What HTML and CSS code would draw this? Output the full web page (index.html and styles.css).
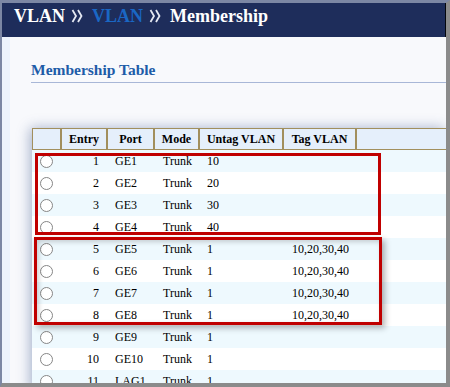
FILE: index.html
```html
<!DOCTYPE html>
<html lang="en">
  <head>
    <meta charset="UTF-8" />
    <meta name="viewport" content="width=device-width, initial-scale=1.0" />
    <title>VLAN Membership</title>
    <link rel="stylesheet" href="styles.css">
  </head>

  <body>
    <div class="window">
      <div class="top-bar">
        <span class="crumb">VLAN</span>
        <svg class="sep" width="12" height="14" viewBox="0 0 12 14">
          <polyline points="1.5,1 5,7 1.5,13" />
          <polyline points="7,1 10.5,7 7,13" />
        </svg>
        <span class="crumb crumb-link">VLAN</span>
        <svg class="sep" width="12" height="14" viewBox="0 0 12 14">
          <polyline points="1.5,1 5,7 1.5,13" />
          <polyline points="7,1 10.5,7 7,13" />
        </svg>
        <span class="crumb">Membership</span>
      </div>

      <div class="content">
        <h2 class="section-title">Membership Table</h2>

        <div class="table-box">
          <table class="member-table">
            <colgroup>
              <col class="col-sel" />
              <col class="col-entry" />
              <col class="col-port" />
              <col class="col-mode" />
              <col class="col-untag" />
              <col class="col-tag" />
              <col />
            </colgroup>
            <thead>
              <tr>
                <th></th>
                <th>Entry</th>
                <th>Port</th>
                <th>Mode</th>
                <th>Untag VLAN</th>
                <th>Tag VLAN</th>
                <th class="th-fill"></th>
              </tr>
            </thead>
            <tbody>
              <tr><td class="sel"><span class="radio"></span></td><td class="entry">1</td><td class="port">GE1</td><td class="mode">Trunk</td><td class="untag">10</td><td class="tag"></td><td></td></tr>
              <tr><td class="sel"><span class="radio"></span></td><td class="entry">2</td><td class="port">GE2</td><td class="mode">Trunk</td><td class="untag">20</td><td class="tag"></td><td></td></tr>
              <tr><td class="sel"><span class="radio"></span></td><td class="entry">3</td><td class="port">GE3</td><td class="mode">Trunk</td><td class="untag">30</td><td class="tag"></td><td></td></tr>
              <tr><td class="sel"><span class="radio"></span></td><td class="entry">4</td><td class="port">GE4</td><td class="mode">Trunk</td><td class="untag">40</td><td class="tag"></td><td></td></tr>
              <tr><td class="sel"><span class="radio"></span></td><td class="entry">5</td><td class="port">GE5</td><td class="mode">Trunk</td><td class="untag">1</td><td class="tag">10,20,30,40</td><td></td></tr>
              <tr><td class="sel"><span class="radio"></span></td><td class="entry">6</td><td class="port">GE6</td><td class="mode">Trunk</td><td class="untag">1</td><td class="tag">10,20,30,40</td><td></td></tr>
              <tr><td class="sel"><span class="radio"></span></td><td class="entry">7</td><td class="port">GE7</td><td class="mode">Trunk</td><td class="untag">1</td><td class="tag">10,20,30,40</td><td></td></tr>
              <tr><td class="sel"><span class="radio"></span></td><td class="entry">8</td><td class="port">GE8</td><td class="mode">Trunk</td><td class="untag">1</td><td class="tag">10,20,30,40</td><td></td></tr>
              <tr><td class="sel"><span class="radio"></span></td><td class="entry">9</td><td class="port">GE9</td><td class="mode">Trunk</td><td class="untag">1</td><td class="tag"></td><td></td></tr>
              <tr><td class="sel"><span class="radio"></span></td><td class="entry">10</td><td class="port">GE10</td><td class="mode">Trunk</td><td class="untag">1</td><td class="tag"></td><td></td></tr>
              <tr><td class="sel"><span class="radio"></span></td><td class="entry">11</td><td class="port">LAG1</td><td class="mode">Trunk</td><td class="untag">1</td><td class="tag"></td><td></td></tr>
            </tbody>
          </table>

          <div class="mark mark-untag"></div>
          <div class="mark mark-tag"></div>
        </div>
      </div>
    </div>
  </body>
</html>
```

FILE: styles.css
```css
body {
  margin: 0;
  width: 450px;
  height: 387px;
  overflow: hidden;
  background: #8b8b8b;
  font-family: "Liberation Serif", "Times New Roman", serif;
}

.window {
  width: 444px;
  height: 380px;
  overflow: hidden;
  border-top: 3px solid #7c87a4;
  border-left: 2px solid #7c87a4;
  border-right: 4px solid #8b8b8b;
  border-bottom: 4px solid #8b8b8b;
  background: #f8f9fc;
  display: flex;
  flex-direction: column;
}

.top-bar {
  height: 34px;
  box-sizing: border-box;
  padding: 2px 0 0 12px;
  background: #1e2d5b;
  border-right: 1px solid #05070d;
  display: flex;
  align-items: flex-start;
  flex-shrink: 0;
}

.crumb {
  font-size: 18px;
  font-weight: bold;
  line-height: 22px;
  color: #ffffff;
}

.crumb-link {
  color: #1a67c4;
}

.sep {
  margin: 4px 9px 0 6px;
  fill: none;
  stroke: #e4e8f2;
  stroke-width: 1.8;
}

.content {
  flex: 1;
  border-left: 8px solid #edf3fc;
  padding-left: 21px;
}

.section-title {
  margin: 0;
  padding: 24px 0 3px 0;
  font-size: 15.5px;
  line-height: 18px;
  font-weight: bold;
  color: #1e5ca8;
  border-bottom: 1px solid #a8b7d7;
}

.table-box {
  position: relative;
  margin: 45px 0 0 1px;
  background: #ffffff;
  box-shadow: -2px 0 12px rgba(40, 70, 130, 0.4);
}

.member-table {
  width: 100%;
  table-layout: fixed;
  border-collapse: separate;
  border-spacing: 0;
  font-family: "Liberation Serif", "Times New Roman", serif;
  font-size: 12px;
  color: #000000;
}

.col-sel { width: 29px; }
.col-entry { width: 46px; }
.col-port { width: 47px; }
.col-mode { width: 45px; }
.col-untag { width: 84px; }
.col-tag { width: 73px; }

.member-table th {
  height: 20px;
  padding: 0;
  background: #e5effb;
  border: 1px solid #a28f5d;
  font-weight: bold;
  text-align: center;
  white-space: nowrap;
}

.member-table th.th-fill {
  border-right: none;
}

.member-table td {
  height: 22px;
  padding: 0;
  white-space: nowrap;
  vertical-align: middle;
}

.member-table tbody tr:nth-child(odd) td {
  background: #eef9fe;
}

.member-table tbody tr:nth-child(even) td {
  background: #ffffff;
}

.sel {
  padding-left: 2px;
}

.radio {
  display: block;
  width: 11px;
  height: 11px;
  margin: 0 auto;
  border: 1px solid #868686;
  border-radius: 50%;
  background: #ffffff;
}

.member-table td.entry {
  text-align: right;
  padding-right: 8px;
}

.member-table td.port {
  padding-left: 8px;
}

.member-table td.mode {
  padding-left: 9px;
}

.member-table td.untag {
  padding-left: 8px;
}

.member-table td.tag {
  padding-left: 9px;
}

.mark {
  position: absolute;
  box-sizing: border-box;
  border: 3px solid #c00000;
}

.mark-untag {
  left: 3px;
  top: 25px;
  width: 346px;
  height: 82px;
}

.mark-tag {
  left: 2px;
  top: 109px;
  width: 348px;
  height: 88px;
  box-shadow: 3px 3px 6px rgba(0, 0, 0, 0.3), inset 2px 2px 5px rgba(0, 0, 0, 0.18);
}
```
